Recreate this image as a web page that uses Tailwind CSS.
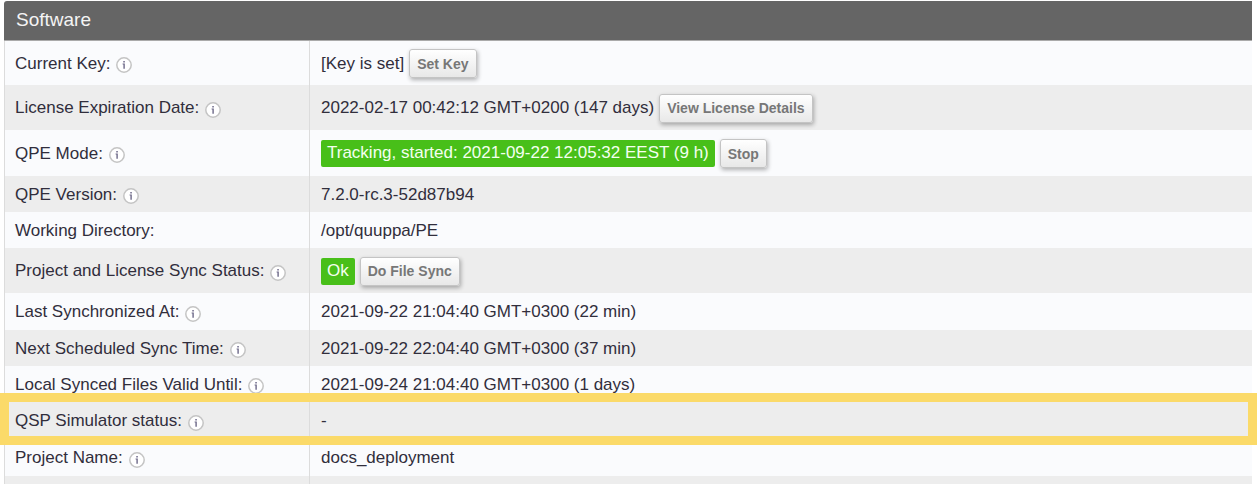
<!DOCTYPE html>
<html lang="en">
<head>
<meta charset="utf-8">
<title>Software</title>
<script src="https://cdn.jsdelivr.net/npm/@tailwindcss/browser@4"></script>
</head>
<body class="overflow-x-hidden bg-white font-['Liberation_Sans',Arial,sans-serif] text-[17px] leading-5 text-[#312e3c]">
<svg class="hidden" aria-hidden="true">
  <symbol id="info" viewBox="0 0 16 16">
    <circle cx="8" cy="8" r="7.2" fill="#fff" stroke="#c4c4c4" stroke-width="1.5"/>
    <path d="M7.3 3.9h1.5v1.5H7.3zM6.6 6.5h2.2v5.3H7.4V7.4h-.8z" fill="#6c6888"/>
  </symbol>
</svg>
<main class="pt-px pr-[5px] pl-1">
<table class="w-full table-fixed border-separate border-spacing-0 border-l border-[#dcdcdc] text-left [&_th]:border-r [&_th]:border-[#dcdcdc] [&_th]:pl-[10px] [&_th]:pt-px [&_td]:pt-px [&_th]:font-normal [&_td]:pl-[11px] [&_th>div]:flex [&_th>div]:items-center [&_th>div]:gap-[6px] [&_td>div]:flex [&_td>div]:items-center [&_td>div]:gap-[5px] [&_svg]:mt-[3px] [&_svg]:size-4 [&_button]:h-[29px] [&_button]:cursor-pointer [&_button]:rounded-[3px] [&_button]:border [&_button]:border-[#c4c4c4] [&_button]:bg-linear-to-b [&_button]:from-white [&_button]:to-[#e8e8e8] [&_button]:px-[7px] [&_button]:text-[14px] [&_button]:font-bold [&_button]:text-[#777] [&_button]:shadow-[1px_2px_4px_#0000004d]">
  <caption class="h-10 rounded-tl-[3px] border-b border-[#aaa] bg-[#656565] pl-3 text-left text-[19px] leading-[38px] text-[#f4f4f4]">Software</caption>
  <colgroup><col class="w-[305px]"><col></colgroup>
  <tbody>
    <tr class="h-[44px] bg-[#fafbfd]"><th scope="row"><div>Current Key: <svg><use href="#info"/></svg></div></th><td><div>[Key is set] <button type="button">Set Key</button></div></td></tr>
    <tr class="h-[45px] bg-[#ededed]"><th scope="row"><div>License Expiration Date: <svg><use href="#info"/></svg></div></th><td><div>2022-02-17 00:42:12 GMT+0200 (147 days) <button type="button">View License Details</button></div></td></tr>
    <tr class="h-[46px] bg-[#fafbfd]"><th scope="row"><div>QPE Mode: <svg><use href="#info"/></svg></div></th><td><div><span class="rounded-[2px] bg-[#48bf19] px-[6px] pt-[3px] pb-1 text-[#f4fff0]">Tracking, started: 2021-09-22 12:05:32 EEST (9 h)</span> <button type="button">Stop</button></div></td></tr>
    <tr class="h-[36px] bg-[#ededed]"><th scope="row"><div>QPE Version: <svg><use href="#info"/></svg></div></th><td>7.2.0-rc.3-52d87b94</td></tr>
    <tr class="h-[36px] bg-[#fafbfd]"><th scope="row">Working Directory:</th><td>/opt/quuppa/PE</td></tr>
    <tr class="h-[45px] bg-[#ededed]"><th scope="row"><div>Project and License Sync Status: <svg><use href="#info"/></svg></div></th><td><div><span class="rounded-[2px] bg-[#48bf19] px-[6px] pt-[3px] pb-1 text-[#f4fff0]">Ok</span> <button type="button">Do File Sync</button></div></td></tr>
    <tr class="h-[37px] bg-[#fafbfd]"><th scope="row"><div>Last Synchronized At: <svg><use href="#info"/></svg></div></th><td>2021-09-22 21:04:40 GMT+0300 (22 min)</td></tr>
    <tr class="h-[36px] bg-[#ededed]"><th scope="row"><div>Next Scheduled Sync Time: <svg><use href="#info"/></svg></div></th><td>2021-09-22 22:04:40 GMT+0300 (37 min)</td></tr>
    <tr class="h-[36px] bg-[#fafbfd]"><th scope="row"><div>Local Synced Files Valid Until: <svg><use href="#info"/></svg></div></th><td>2021-09-24 21:04:40 GMT+0300 (1 days)</td></tr>
    <tr class="relative h-[37px] bg-[#ededed]"><th scope="row"><div>QSP Simulator status: <svg><use href="#info"/></svg></div><span class="pointer-events-none absolute -top-[9px] -right-[5px] -bottom-[6px] -left-[5px] border-[9px] border-[#fbda69]"></span></th><td>-</td></tr>
    <tr class="h-[37px] bg-[#fafbfd]"><th scope="row"><div>Project Name: <svg><use href="#info"/></svg></div></th><td>docs_deployment</td></tr>
    <tr class="h-2 bg-[#ededed]"><th></th><td></td></tr>
  </tbody>
</table>
</main>
</body>
</html>
